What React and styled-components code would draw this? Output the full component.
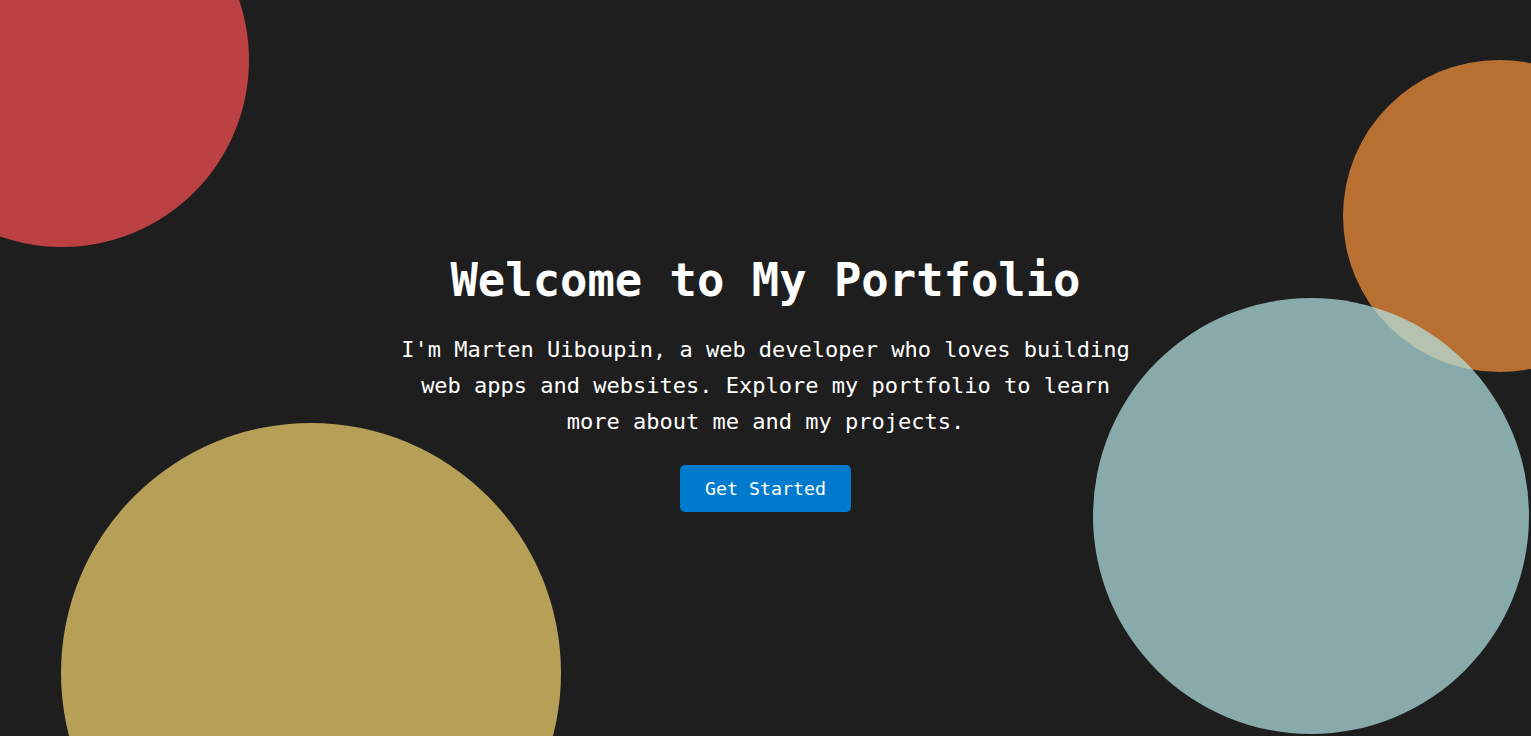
import React from "react";
import styled, { createGlobalStyle } from "styled-components";

const GlobalStyle = createGlobalStyle`
  html, body {
    margin: 0;
    padding: 0;
    background: #1e1e1e;
    overflow: hidden;
  }
  * { box-sizing: border-box; }
`;

const circles = [
  { size: 374, left: -125, top: -127, color: "#ff5053" },
  { size: 312, left: 1343, top: 60, color: "#fa923b" },
  { size: 500, left: 61, top: 423, color: "#f7d56f" },
  { size: 436, left: 1093, top: 298, color: "#b5e6e5" },
];

const Hero = () => {
  return (
    <HeroSection>
      {circles.map((c, i) => (
        <Circle
          key={i}
          $color={c.color}
          style={{ width: c.size, height: c.size, left: c.left, top: c.top }}
        />
      ))}
      <Content>
        <Title>Welcome to My Portfolio</Title>
        <Intro>
          I'm Marten Uiboupin, a web developer who loves building web apps and
          websites. Explore my portfolio to learn more about me and my projects.
        </Intro>
        <CtaButton>Get Started</CtaButton>
      </Content>
    </HeroSection>
  );
};

const HeroSection = styled.section`
  position: relative;
  height: 736px;
  overflow: hidden;
  background: #1e1e1e;
  display: flex;
  align-items: center;
  justify-content: center;
  padding-top: 30px;
  font-family: "DejaVu Sans Mono", "Liberation Mono", monospace;
  color: #ffffff;
`;

const Circle = styled.div`
  position: absolute;
  border-radius: 50%;
  background: ${(p) => p.$color};
  opacity: 0.7;
`;

const Content = styled.div`
  position: relative;
  z-index: 1;
  display: flex;
  flex-direction: column;
  align-items: center;
  text-align: center;
`;

const Title = styled.h1`
  margin: 0 0 23px;
  font-size: 45.5px;
  line-height: 1.2;
  font-weight: bold;
`;

const Intro = styled.p`
  margin: 0 0 25px;
  max-width: 740px;
  font-size: 22px;
  line-height: 36px;
`;

const CtaButton = styled.button`
  font-family: inherit;
  font-size: 18.3px;
  line-height: 27px;
  padding: 10px 25px;
  color: #ffffff;
  background: #007acc;
  border: none;
  border-radius: 5px;
  cursor: pointer;
`;

export default function App() {
  return (
    <>
      <GlobalStyle />
      <Hero />
    </>
  );
}
